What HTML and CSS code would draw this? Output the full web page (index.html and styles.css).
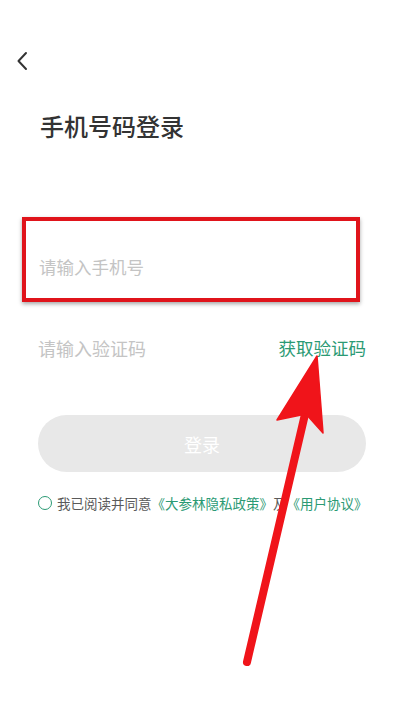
FILE: index.html
```html
<!DOCTYPE html>
<html lang="zh">
<head>
<meta charset="utf-8">
<link rel="stylesheet" href="styles.css">
</head>
<body>
<div class="page">
  <div class="topbar">
    <svg class="back" width="12" height="20" viewBox="0 0 12 20"><path d="M10 2 L2.5 10 L10 18" fill="none" stroke="#333" stroke-width="2" stroke-linecap="round" stroke-linejoin="round"/></svg>
  </div>
  <h1 class="title">手机号码登录</h1>
  <div class="phone-box">
    <span class="placeholder">请输入手机号</span>
  </div>
  <div class="code-row">
    <span class="placeholder code">请输入验证码</span>
    <span class="get-code">获取验证码</span>
  </div>
  <div class="login-btn">登录</div>
  <div class="agree">
    <span class="circle"></span>
    <span class="agree-text">我已阅读并同意<span class="link">《大参林隐私政策》</span>及<span class="link">《用户协议》</span></span>
  </div>
  <svg class="arrow" width="404" height="720" viewBox="0 0 404 720">
    <line x1="247" y1="662" x2="306" y2="410" stroke="#f0141a" stroke-width="8" stroke-linecap="round"/>
    <polygon points="317,356 277,420 306,414 323,433" fill="#f0141a" stroke="#f0141a" stroke-width="1.5" stroke-linejoin="round"/>
  </svg>
</div>
</body>
</html>
```
FILE: styles.css
```css
* { box-sizing: border-box; }
html, body { margin: 0; padding: 0; background: #fff; }
body {
  font-family: "Noto Sans CJK SC", "Noto Sans", sans-serif;
  width: 404px;
  height: 720px;
  overflow: hidden;
}
.page { position: relative; width: 404px; height: 720px; }
.topbar { height: 110px; padding: 51px 0 0 16px; }
.back { display: block; }
.title {
  margin: 0 0 0 40px;
  font-size: 24px;
  line-height: 32px;
  font-weight: 500;
  color: #333;
}
.phone-box {
  margin: 75px 0 0 22px;
  width: 338px;
  height: 85px;
  border: 4px solid #e0141b;
  box-shadow: 0 2px 4px rgba(0,0,0,0.35);
  padding: 34px 0 0 13px;
}
.placeholder {
  font-size: 17.5px;
  line-height: 24px;
  color: #c4c4c4;
  display: block;
}
.placeholder.code { font-size: 18px; }
.code-row {
  margin: 34px 0 0 38px;
  width: 328px;
  display: flex;
  justify-content: space-between;
  align-items: center;
}
.get-code {
  font-size: 17.5px;
  line-height: 24px;
  color: #2b9a74;
}
.login-btn {
  margin: 55px 0 0 38px;
  width: 328px;
  height: 57px;
  border-radius: 29px;
  background: #e8e8e8;
  color: #fff;
  font-size: 18px;
  display: flex;
  align-items: center;
  justify-content: center;
}
.agree {
  margin: 22px 0 0 38px;
  display: flex;
  align-items: center;
  gap: 5px;
}
.circle {
  width: 14px;
  height: 14px;
  border: 1.6px solid #2b9a74;
  border-radius: 50%;
  flex: none;
}
.agree-text {
  font-size: 13.5px;
  line-height: 18px;
  color: #5a5a5a;
  white-space: nowrap;
}
.link { color: #2b9a74; }
.arrow { position: absolute; left: 0; top: 0; pointer-events: none; }
```
